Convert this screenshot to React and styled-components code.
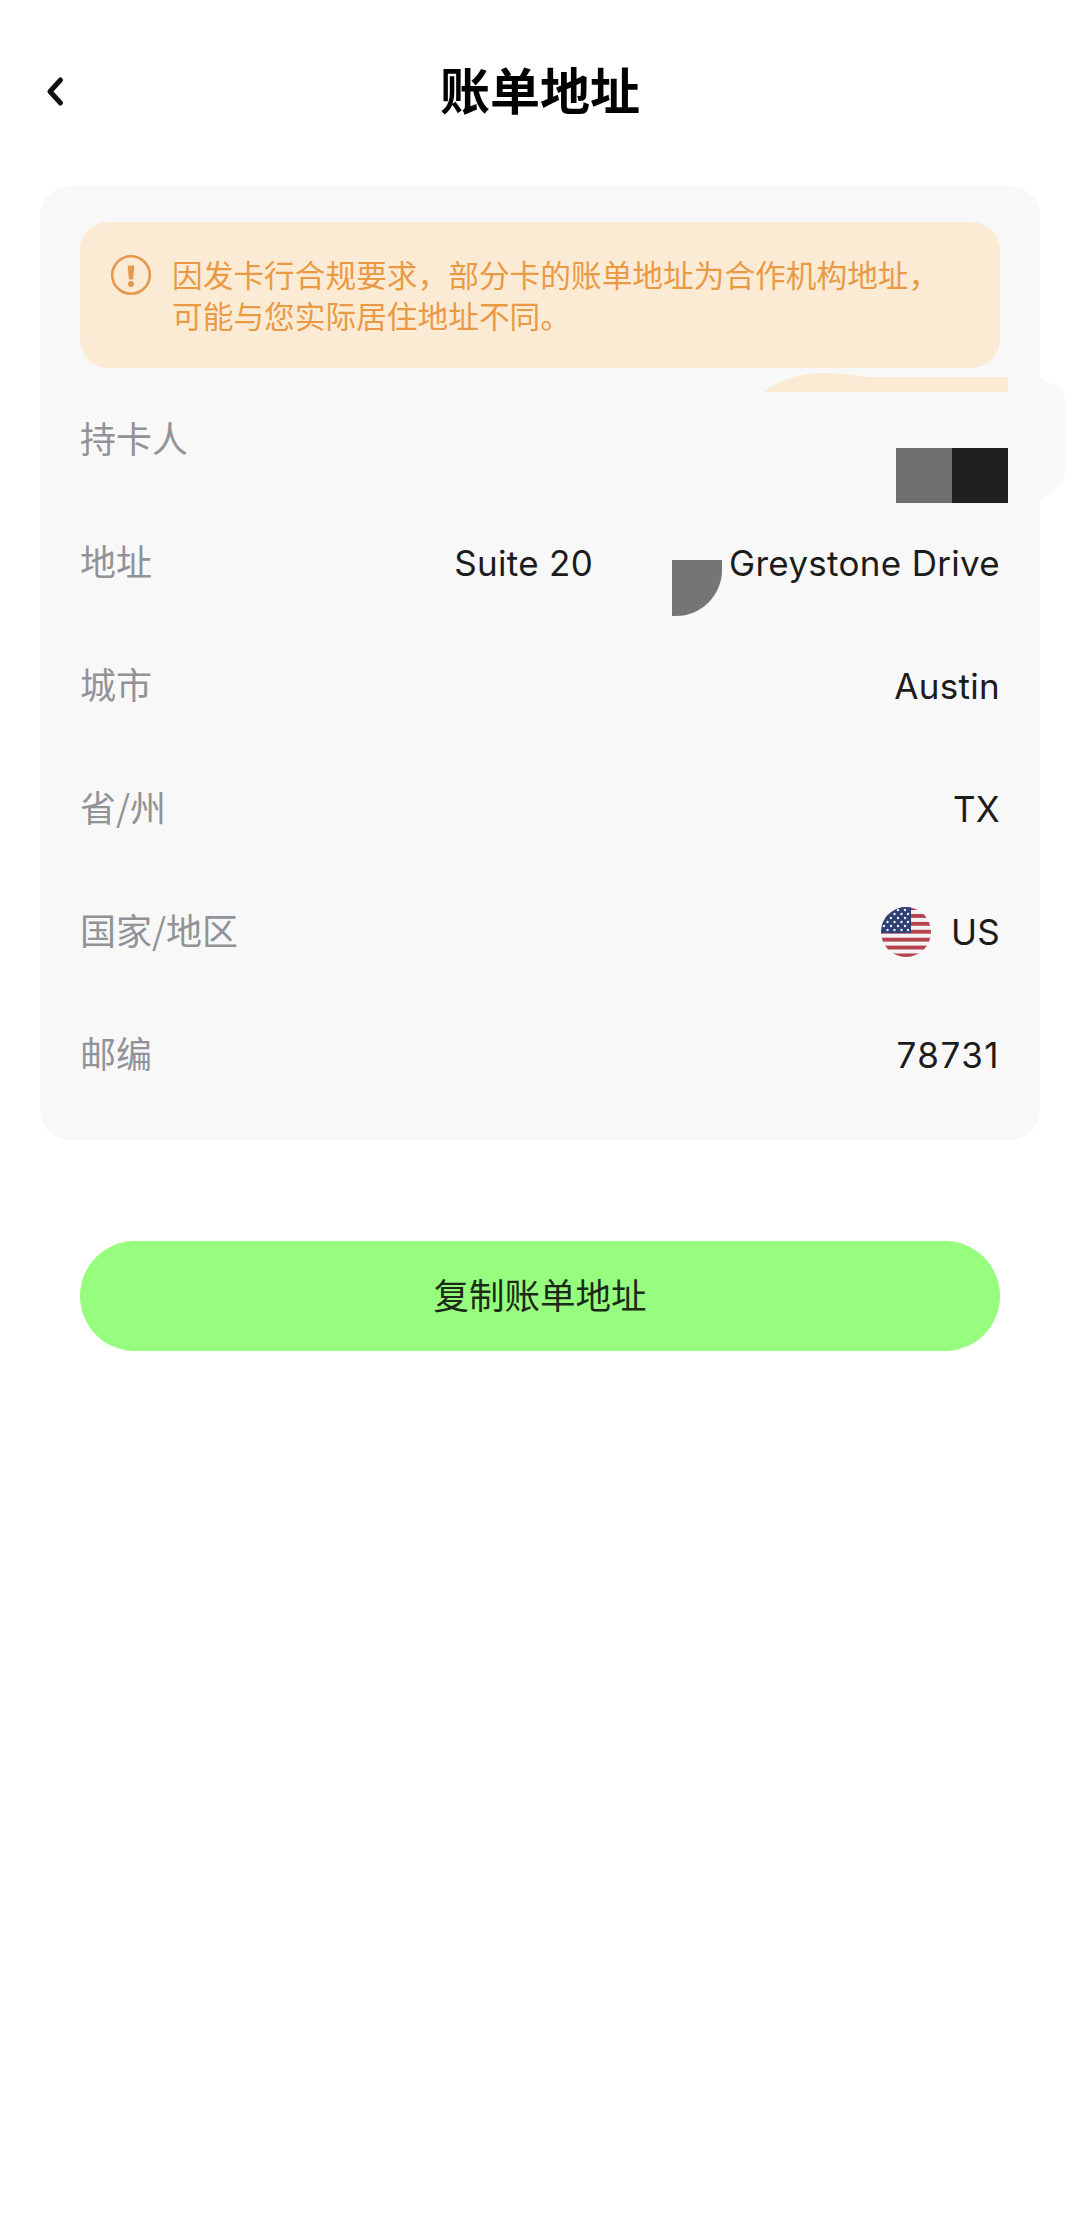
import styled, { createGlobalStyle } from "styled-components"

const GlobalStyle = createGlobalStyle`
  html, body { margin: 0; padding: 0; background: #fff; }
  * { box-sizing: border-box; }
  body { font-family: "Inter", "Noto Sans CJK SC", sans-serif; }
`

const Page = styled.div`
  width: 1080px;
  min-height: 2228px;
  background: #fff;
  overflow: hidden;
`
const Header = styled.header`
  position: relative;
  height: 186px;
  padding-bottom: 10px;
  display: flex;
  align-items: center;
  justify-content: center;
`
const BackButton = styled.button`
  position: absolute;
  left: 40px;
  top: 72px;
  width: 32px;
  height: 40px;
  padding: 0;
  border: 0;
  background: none;
  display: flex;
  align-items: center;
  justify-content: center;
`
const Title = styled.h1`
  margin: 0;
  font-family: "Noto Sans CJK SC", sans-serif;
  font-size: 50px;
  line-height: 60px;
  font-weight: 700;
  color: #000;
`
const Card = styled.section`
  position: relative;
  margin: 0 40px;
  padding: 36px 40px 24px;
  border-radius: 30px;
  background: #f8f8f8;
`
const Notice = styled.div`
  height: 146px;
  padding: 31px 30px 0 30px;
  display: flex;
  gap: 20px;
  border-radius: 28px;
  background: #fbebd5;
`
const NoticeIcon = styled.svg`
  flex: none;
  width: 42px;
  height: 42px;
  margin-top: 1px;
`
const NoticeText = styled.p`
  margin: 0;
  font-family: "Noto Sans CJK SC", sans-serif;
  font-size: 30.7px;
  line-height: 41px;
  color: #ea9a45;
  white-space: nowrap;
`
const Rows = styled.div`
  margin-top: 10px;
`
const Row = styled.div`
  height: 123px;
  display: flex;
  align-items: center;
  justify-content: space-between;
`
const Label = styled.span`
  padding-bottom: 5px;
  font-family: "Noto Sans CJK SC", sans-serif;
  font-size: 36px;
  color: #919399;
`
const Value = styled.span`
  display: flex;
  align-items: center;
  gap: 20px;
  font-size: 35px;
  letter-spacing: ${(p) => p.$spacing || 0.3}px;
  color: #1c1c1c;
`
const AddressGap = styled.span`
  width: 96px;
`
const Flag = styled.svg`
  width: 50px;
  height: 50px;
`
const RedactPatch = styled.div`
  position: absolute;
  left: ${(p) => p.$left}px;
  top: ${(p) => p.$top}px;
  width: ${(p) => p.$width}px;
  height: ${(p) => p.$height}px;
  background: ${(p) => p.$color};
  border-bottom-right-radius: ${(p) => p.$curve || 0}px;
`
const Smudge = styled.svg`
  position: absolute;
  left: ${(p) => p.$left}px;
  top: ${(p) => p.$top}px;
`
const CopyButton = styled.button`
  display: block;
  width: 920px;
  height: 110px;
  margin: 101px 80px 0;
  padding: 0 0 5px;
  border: 0;
  border-radius: 55px;
  background: #97fd7f;
  font-family: "Noto Sans CJK SC", sans-serif;
  font-size: 35.5px;
  color: #1c2a18;
`

const STRIPES = [0, 1, 2, 3, 4, 5, 6]
const STAR_ROWS = [
  [3, 10, 17, 24],
  [6.5, 13.5, 20.5, 27],
  [3, 10, 17, 24],
  [6.5, 13.5, 20.5, 27],
  [3, 10, 17, 24],
  [6.5, 13.5, 20.5, 27],
]

const USFlag = () => (
  <Flag viewBox="0 0 50 50">
    <defs>
      <clipPath id="flagCircle">
        <circle cx="25" cy="25" r="25" />
      </clipPath>
    </defs>
    <g clipPath="url(#flagCircle)">
      <rect width="50" height="50" fill="#f4f2f2" />
      {STRIPES.map((i) => (
        <rect key={i} x="0" y={i * 7.9 - 0.9} width="50" height="3.9" fill="#b5434f" />
      ))}
      <rect width="30" height="26" fill="#2f3f78" />
      {STAR_ROWS.map((xs, r) =>
        xs.map((x) => <circle key={`${r}-${x}`} cx={x} cy={3 + r * 4} r="1.2" fill="#f4f4f8" />)
      )}
    </g>
  </Flag>
)

const App = () => {
  return (
    <Page>
      <GlobalStyle />
      <Header>
        <BackButton aria-label="返回">
          <svg width="22" height="32" viewBox="0 0 22 32">
            <path d="M15.5 4 L5 15.5 L15.5 27" fill="none" stroke="#111" strokeWidth="5" strokeLinecap="round" strokeLinejoin="round" />
          </svg>
        </BackButton>
        <Title>账单地址</Title>
      </Header>
      <Card>
        <Notice>
          <NoticeIcon viewBox="0 0 42 42">
            <circle cx="21" cy="21" r="18.8" fill="none" stroke="#e39a50" strokeWidth="2.6" />
            <path d="M17.6 11.5 h6.8 l-1.3 14 h-4.2 z" fill="#e39a50" strokeLinejoin="round" />
            <circle cx="21" cy="30" r="3" fill="#e39a50" />
          </NoticeIcon>
          <NoticeText>
            因发卡行合规要求{"\uFF0C"}部分卡的账单地址为合作机构地址{"\uFF0C"}
            <br />
            可能与您实际居住地址不同。
          </NoticeText>
        </Notice>
        <Rows>
          <Row>
            <Label>持卡人</Label>
          </Row>
          <Row>
            <Label>地址</Label>
            <Value>
              Suite 20
              <AddressGap />
              Greystone Drive
            </Value>
          </Row>
          <Row>
            <Label>城市</Label>
            <Value>Austin</Value>
          </Row>
          <Row>
            <Label>省/州</Label>
            <Value>TX</Value>
          </Row>
          <Row>
            <Label>国家/地区</Label>
            <Value>
              <USFlag />
              US
            </Value>
          </Row>
          <Row>
            <Label>邮编</Label>
            <Value $spacing={1.5}>78731</Value>
          </Row>
        </Rows>
        {/* redaction leftovers painted over the card */}
        <Smudge $left={1000} $top={192} width="26" height="122" viewBox="0 0 26 122">
          <path d="M0 0 L18 9 Q25 13 25 22 V94 Q25 104 16 110 L0 122 Z" fill="#f9f9f9" />
        </Smudge>
        <Smudge $left={722} $top={186} width="248" height="20" viewBox="0 0 248 20">
          <path d="M2 20 Q24 2 60 1 Q86 1 104 5 H246 V20 Z" fill="#fbebd5" />
        </Smudge>
        <Smudge $left={556} $top={370} width="30" height="60" viewBox="0 0 30 60">
          <path d="M8 8 L24 4 L26 48 L10 54 Z" fill="#f9f9f9" />
        </Smudge>
        <RedactPatch $left={856} $top={262} $width={56} $height={55} $color="#707070" />
        <RedactPatch $left={912} $top={262} $width={56} $height={55} $color="#202020" />
        <RedactPatch $left={632} $top={374} $width={50} $height={56} $color="#757575" $curve={46} />
      </Card>
      <CopyButton>复制账单地址</CopyButton>
    </Page>
  )
}

export default App
